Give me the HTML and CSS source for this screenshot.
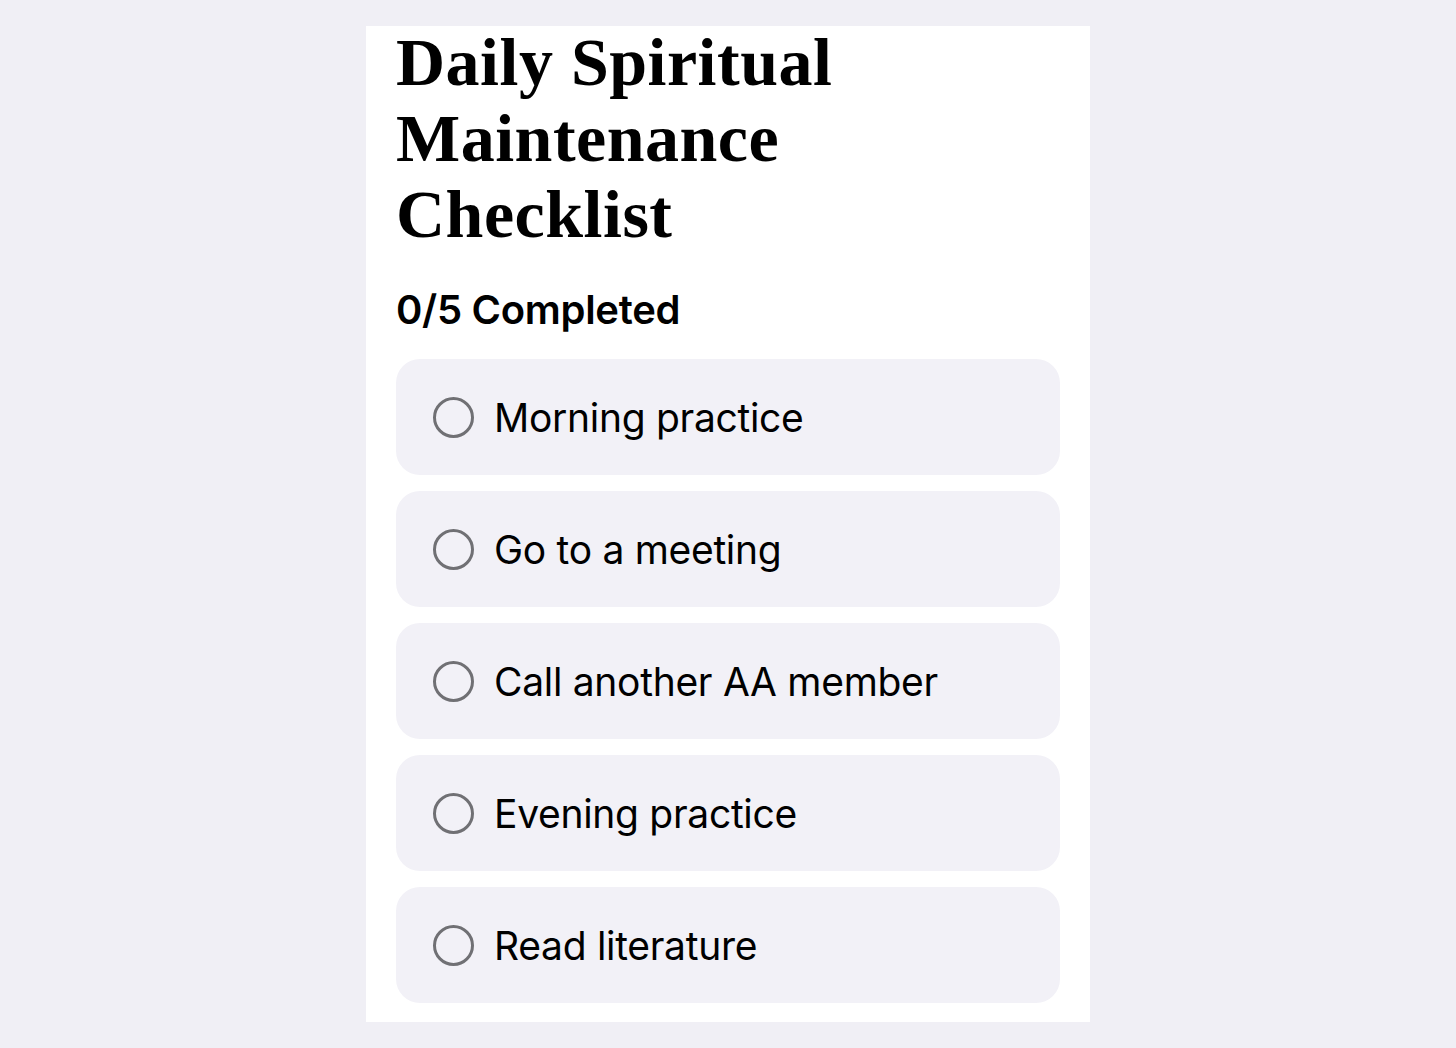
FILE: index.html
```html
<!DOCTYPE html>
<html lang="en">
<head>
    <meta charset="UTF-8">
    <meta name="viewport" content="width=device-width, initial-scale=1.0">
    <title>Daily Spiritual Maintenance Checklist</title>
    <link rel="stylesheet" href="styles.css">
</head>
<body>
    <!-- Carte principale -->
    <div class="card">
        <h1 class="title">Daily Spiritual Maintenance Checklist</h1>

        <div class="progress">0/5 Completed</div>

        <ul class="checklist">
            <li class="item"><span class="circle"></span><span class="label">Morning practice</span></li>
            <li class="item"><span class="circle"></span><span class="label">Go to a meeting</span></li>
            <li class="item"><span class="circle"></span><span class="label">Call another AA member</span></li>
            <li class="item"><span class="circle"></span><span class="label">Evening practice</span></li>
            <li class="item"><span class="circle"></span><span class="label">Read literature</span></li>
        </ul>
    </div>
</body>
</html>
```

FILE: styles.css
```css
/* Fond gris lavande */
body {
    margin: 0;
    padding: 0;
    background-color: #f0eff5;
    font-family: Inter, "Liberation Sans", sans-serif;
    color: #000;
}

/* Carte blanche centrée */
.card {
    display: flow-root;
    width: 724px;
    box-sizing: border-box;
    margin: 26px auto 0;
    padding: 0 30px 19px;
    background-color: #ffffff;
}

.title {
    margin: -2px 0 0;
    max-width: 560px;
    font-family: "Liberation Serif", "DejaVu Serif", serif;
    font-weight: bold;
    font-size: 68px;
    line-height: 76px;
    letter-spacing: 0.5px;
}

.progress {
    margin: 34px 0 25px;
    font-size: 40px;
    font-weight: 600;
    line-height: 48px;
    letter-spacing: -0.3px;
}

.checklist {
    list-style: none;
    margin: 0;
    padding: 0;
    display: flex;
    flex-direction: column;
    gap: 16px;
}

.item {
    height: 116px;
    display: flex;
    align-items: center;
    gap: 20px;
    padding-left: 37px;
    background-color: #f2f1f7;
    border-radius: 24px;
}

/* Cercle vide à cocher */
.circle {
    width: 35px;
    height: 35px;
    border: 3px solid #707074;
    border-radius: 50%;
    flex-shrink: 0;
}

.label {
    font-size: 39px;
    letter-spacing: -0.3px;
}
```
